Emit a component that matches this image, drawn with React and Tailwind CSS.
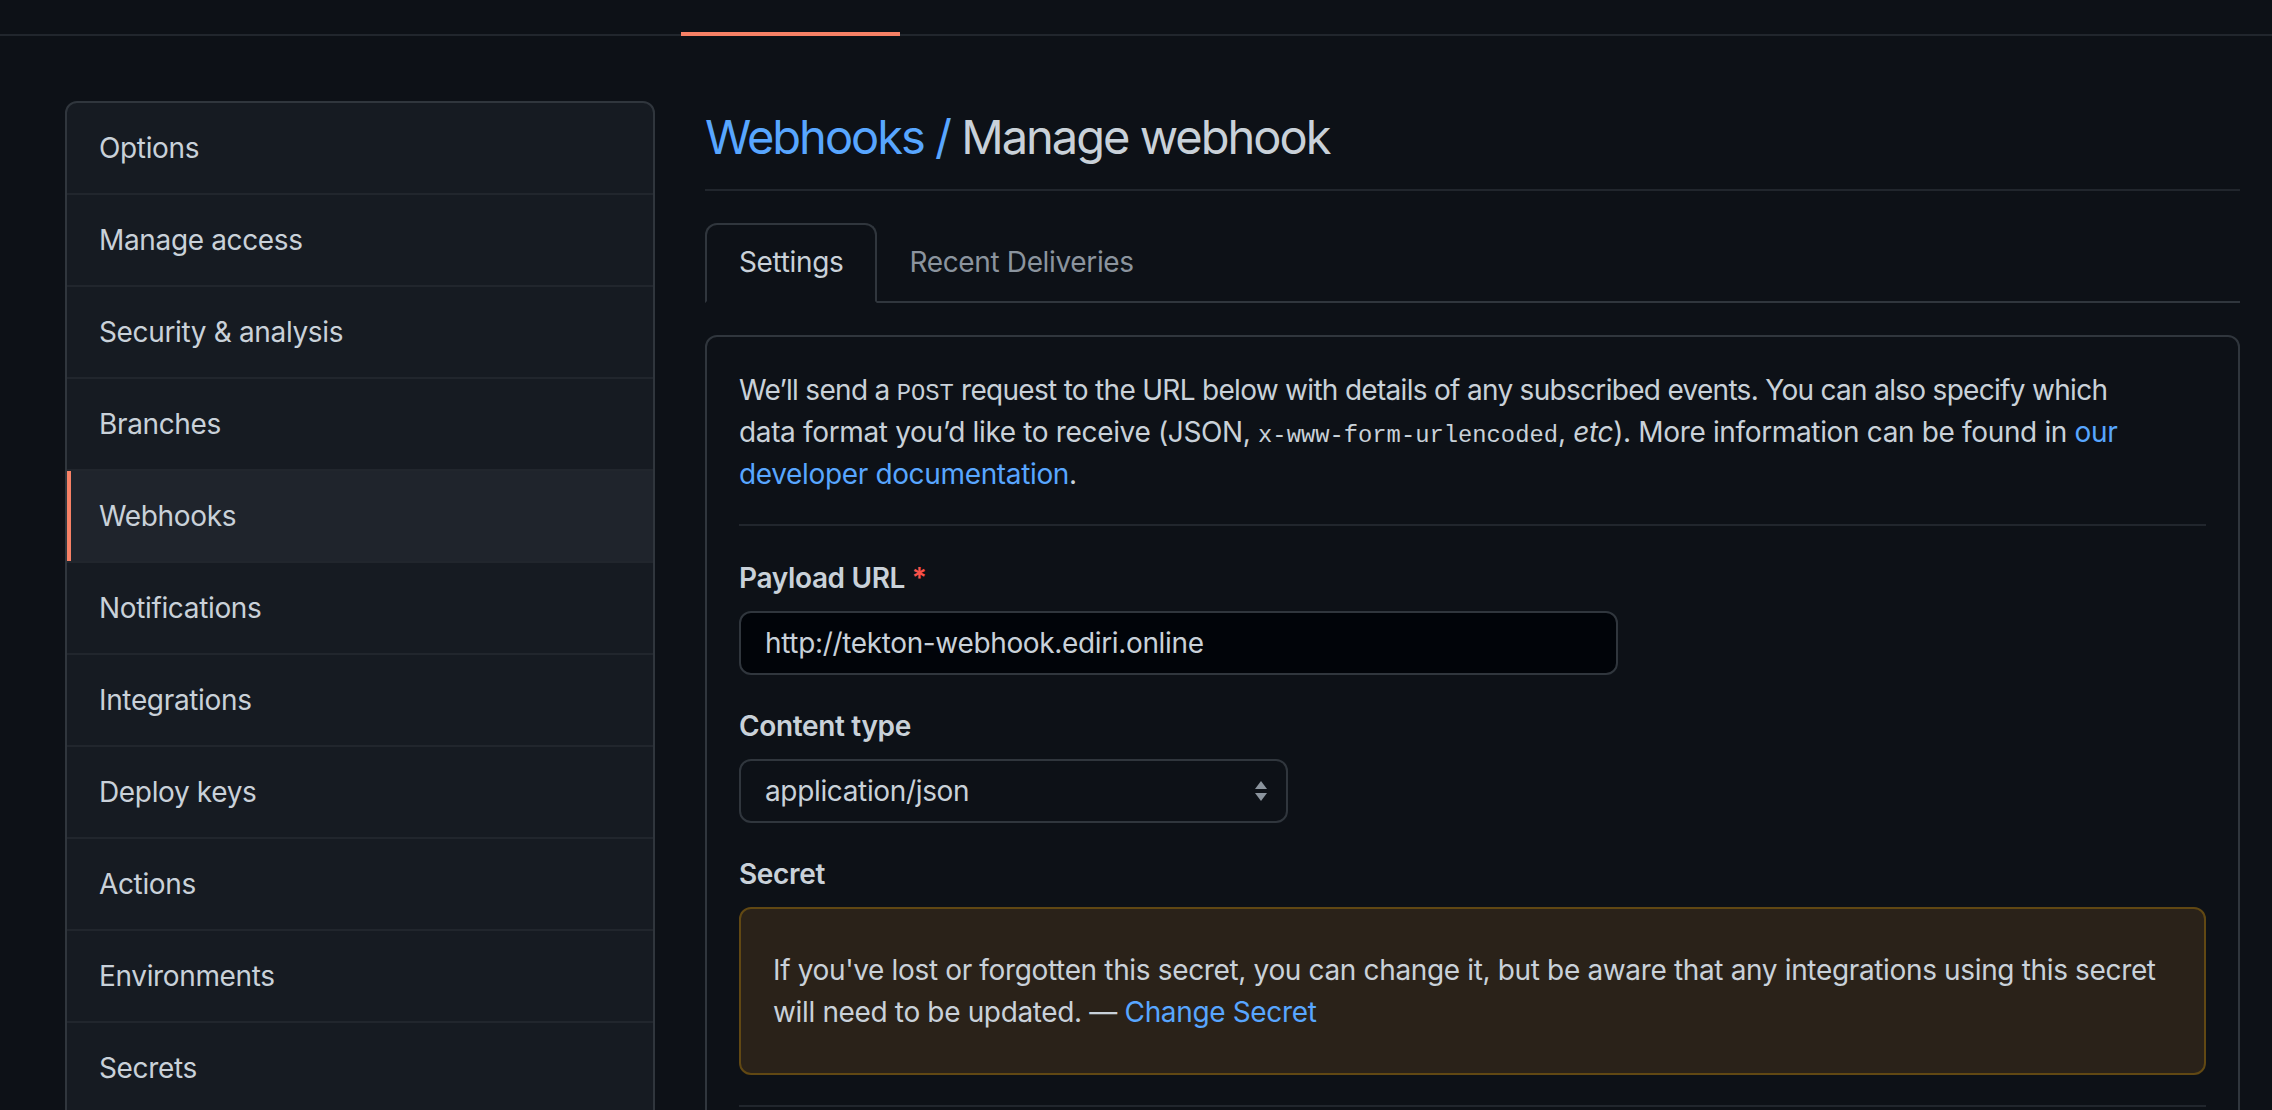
export default function App() {
  const items = [
    "Options",
    "Manage access",
    "Security & analysis",
    "Branches",
    "Webhooks",
    "Notifications",
    "Integrations",
    "Deploy keys",
    "Actions",
    "Environments",
    "Secrets",
    "Pages",
  ];
  const code = "font-['Liberation_Mono',monospace] text-[23.8px] leading-[1] tracking-normal";
  return (
    <div className="min-h-screen bg-[#0d1117] text-[#c9d1d9] font-['Inter','Noto_Sans',sans-serif] text-[28px] leading-[42px] tracking-[-0.35px]">
      <header className="flex h-[36px] items-end border-b-2 border-[#21262d]">
        <div className="ml-[681px] mb-[-2px] h-[4px] w-[219px] bg-[#f78166]" />
      </header>

      <div className="flex gap-[50px] pl-[65px] pr-[32px] pt-[65px]">
        <nav className="w-[590px] shrink-0 self-start overflow-hidden rounded-[12px] border-2 border-[#30363d] bg-[#161b22]">
          {items.map((it, i) => (
            <div
              key={it}
              className={
                it === "Webhooks"
                  ? "border-b-2 border-[#21262d] bg-[#1f242c] px-[32px] py-[24px] shadow-[inset_4px_0_0_#f78166]"
                  : i === items.length - 1
                  ? "px-[32px] py-[24px]"
                  : "border-b-2 border-[#21262d] px-[32px] py-[24px]"
              }
            >
              {it}
            </div>
          ))}
        </nav>

        <main className="min-w-0 flex-1">
          <div className="border-b-2 border-[#21262d] pb-[16px]">
            <h2 className="text-[47px] font-normal leading-[72px] tracking-[-2px]">
              <span className="text-[#58a6ff]">Webhooks /</span>{" "}
              <span>Manage webhook</span>
            </h2>
          </div>

          <div className="mt-[32px] flex border-b-2 border-[#30363d]">
            <div className="mb-[-2px] rounded-t-[12px] border-2 border-[#30363d] border-b-[#0d1117] bg-[#0d1117] px-[32px] py-[16px]">
              Settings
            </div>
            <div className="px-[32px] py-[18px] text-[#8b949e]">Recent Deliveries</div>
          </div>

          <div className="mt-[32px] rounded-[12px] border-2 border-[#30363d] p-[32px]">
            <p>
              <span className="tracking-[-0.7px]">
                We’ll send a <code className={code}>POST</code> request to the URL below with
                details of any subscribed events. You can also specify which
              </span>
              <br />
              data format you’d like to receive (JSON,{" "}
              <code className={code}>x-www-form-urlencoded</code>, <em>etc</em>). More information
              can be found in <a className="text-[#58a6ff]">our</a>
              <br />
              <a className="text-[#58a6ff]">developer documentation</a>.
            </p>

            <div className="mt-[29px] h-[2px] bg-[#21262d]" />

            <div className="mt-[31px] font-semibold">
              Payload URL <span className="text-[#f85149]">*</span>
            </div>
            <div className="mt-[12px] flex h-[64px] w-[879px] items-center rounded-[12px] border-2 border-[#30363d] bg-[#010409] px-[24px]">
              http://tekton-webhook.ediri.online
            </div>

            <div className="mt-[30px] font-semibold">Content type</div>
            <div className="mt-[12px] flex h-[64px] w-[549px] items-center justify-between rounded-[12px] border-2 border-[#30363d] bg-[#0d1117] pl-[24px] pr-[18px]">
              <span>application/json</span>
              <svg width="14" height="24" viewBox="0 0 14 24">
                <polygon points="1,10 7,2 13,10" fill="#8b949e" />
                <polygon points="1,14 7,22 13,14" fill="#8b949e" />
              </svg>
            </div>

            <div className="mt-[30px] font-semibold">Secret</div>
            <div className="mt-[12px] rounded-[12px] border-2 border-[#614813] bg-[#2a2219] px-[32px] py-[40px]">
              If you've lost or forgotten this secret, you can change it, but be aware that any
              integrations using this secret
              <br />
              will need to be updated. — <a className="text-[#58a6ff]">Change Secret</a>
            </div>

            <div className="mt-[30px] h-[2px] bg-[#21262d]" />
            <div className="h-[200px]" />
          </div>
        </main>
      </div>
    </div>
  );
}
